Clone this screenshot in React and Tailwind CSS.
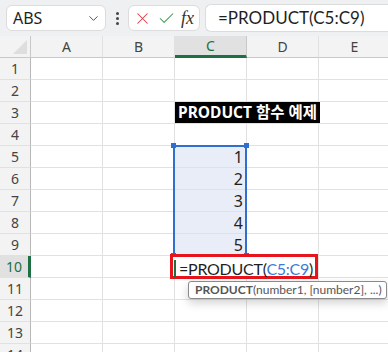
import { ChevronDown, X, Check } from 'lucide-react'

const COLS = ['A', 'B', 'C', 'D', 'E']
const ROWS = [1, 2, 3, 4, 5, 6, 7, 8, 9, 10, 11, 12, 13, 14]

function Cell({ row, col }) {
  const inRange = col === 'C' && row >= 5 && row <= 9
  return (
    <div
      className={`w-[72px] h-[22px] shrink-0 border-r border-b border-[#e1e1e1] flex items-center justify-end pr-[3px] text-[16px] text-[#1f1f1f] ${
        inRange ? 'bg-[#e8edf7]' : 'bg-white'
      }`}
    >
      {inRange ? row - 4 : ''}
    </div>
  )
}

export default function App() {
  return (
    <div className="w-[388px] h-[352px] overflow-hidden bg-white font-['Segoe_UI','Noto_Sans','Noto_Sans_CJK_KR',sans-serif]">
      {/* formula toolbar */}
      <div className="h-[36px] bg-[#eef0f2] flex items-center pl-[6px]">
        <div className="w-[100px] h-[26px] shrink-0 bg-white rounded-md border border-[#dcdcdc] flex items-center justify-between pl-[6px] pr-[4px]">
          <span className="text-[16px] text-[#1f1f1f]">ABS</span>
          <ChevronDown size={15} strokeWidth={1.6} className="text-[#555]" />
        </div>
        <div className="w-[22px] shrink-0 flex flex-col items-center gap-[2px]">
          <span className="w-[3px] h-[3px] bg-[#444] rounded-full" />
          <span className="w-[3px] h-[3px] bg-[#444] rounded-full" />
          <span className="w-[3px] h-[3px] bg-[#444] rounded-full" />
        </div>
        <div className="w-[72px] h-[26px] shrink-0 bg-white rounded-md border border-[#dcdcdc] flex items-center justify-between pl-[4px] pr-[5px]">
          <X size={19} strokeWidth={1.3} className="text-[#e0393e]" />
          <Check size={19} strokeWidth={1.3} className="text-[#3a9a52]" />
          <span className="font-['Liberation_Serif',serif] italic text-[18px] text-[#333] leading-none">fx</span>
        </div>
        <div className="ml-[5px] flex-1 h-[28px] bg-white rounded-l-md border border-r-0 border-[#dcdcdc] flex items-center pl-[12px] text-[17px] text-[#1f1f1f] font-['Lato',sans-serif]">
          =PRODUCT(C5:C9)
        </div>
      </div>

      {/* sheet */}
      <div className="relative">
        {/* column headers */}
        <div className="flex h-[22px]">
          <div className="w-[31px] h-[22px] shrink-0 bg-[#f3f3f3] border-r border-b border-[#c8c8c8] relative overflow-hidden">
            <div className="absolute right-[3px] bottom-[3px] w-0 h-0 border-l-[14px] border-l-transparent border-b-[14px] border-b-[#dedede]" />
          </div>
          {COLS.map(c => (
            <div
              key={c}
              className={`w-[72px] h-[22px] shrink-0 flex items-center justify-center text-[14px] border-r ${
                c === 'C'
                  ? 'bg-[#e1e1e1] text-[#1e6f43] border-[#c8c8c8] border-b-[3px] border-b-[#1e6f43]'
                  : 'bg-[#f3f3f3] text-[#444] border-[#e1e1e1] border-b border-b-[#c8c8c8]'
              }`}
            >
              {c}
            </div>
          ))}
        </div>

        {ROWS.map(r => (
          <div key={r} className="flex h-[22px]">
            <div
              className={`w-[31px] h-[22px] shrink-0 flex items-center justify-center text-[14px] border-b border-[#e1e1e1] ${
                r === 10
                  ? 'bg-[#e1e1e1] text-[#1e6f43] border-r-[3px] border-r-[#1e6f43]'
                  : 'bg-[#f3f3f3] text-[#444] border-r border-r-[#b8b8b8]'
              }`}
            >
              {r}
            </div>
            {r === 3 ? (
              <>
                <Cell row={r} col="A" />
                <Cell row={r} col="B" />
                <div className="w-[145px] h-[22px] shrink-0 bg-black flex items-center pl-[3px] text-white text-[15.5px] font-bold border-b border-[#e1e1e1] whitespace-nowrap overflow-hidden">
                  PRODUCT 함수 예제
                </div>
                <Cell row={r} col="E" />
              </>
            ) : (
              COLS.map(c => <Cell key={c} row={r} col={c} />)
            )}
          </div>
        ))}

        {/* range selection C5:C9 */}
        <div className="absolute left-[173px] top-[109px] w-[74px] h-[111px] border-2 border-[#2f6fd0] pointer-events-none">
          <span className="absolute -left-[4px] -top-[4px] w-[5px] h-[5px] bg-[#2f6fd0]" />
          <span className="absolute -right-[4px] -top-[4px] w-[5px] h-[5px] bg-[#2f6fd0]" />
          <span className="absolute -left-[4px] -bottom-[4px] w-[5px] h-[5px] bg-[#2f6fd0]" />
          <span className="absolute -right-[4px] -bottom-[4px] w-[5px] h-[5px] bg-[#2f6fd0]" />
        </div>

        {/* editing cell C10 */}
        <div className="absolute left-[170px] top-[218px] w-[148px] h-[25px] border-[3px] border-[#e8141b] bg-white pl-[1px] text-[16px] tracking-[-0.25px] text-[#1f1f1f] leading-[19px] font-['Lato',sans-serif] whitespace-nowrap">
          <span className="inline-block align-middle w-[2px] h-[17px] bg-[#1e6f43] mr-[3px]" />
          <span className="align-middle">
            =PRODUCT(<span className="text-[#3b7bd6]">C5:C9</span>)
          </span>
        </div>

        {/* function tooltip */}
        <div className="absolute left-[188px] top-[245px] h-[18px] pl-[6px] pr-[4px] bg-white border border-[#8a8a8a] rounded-[3px] shadow-[0_4px_10px_rgba(0,0,0,0.18)] text-[12px] leading-[16px] text-[#555] whitespace-nowrap font-['Lato',sans-serif]">
          <span className="font-bold">PRODUCT</span>(number1, [number2], ...)
        </div>
      </div>
    </div>
  )
}
